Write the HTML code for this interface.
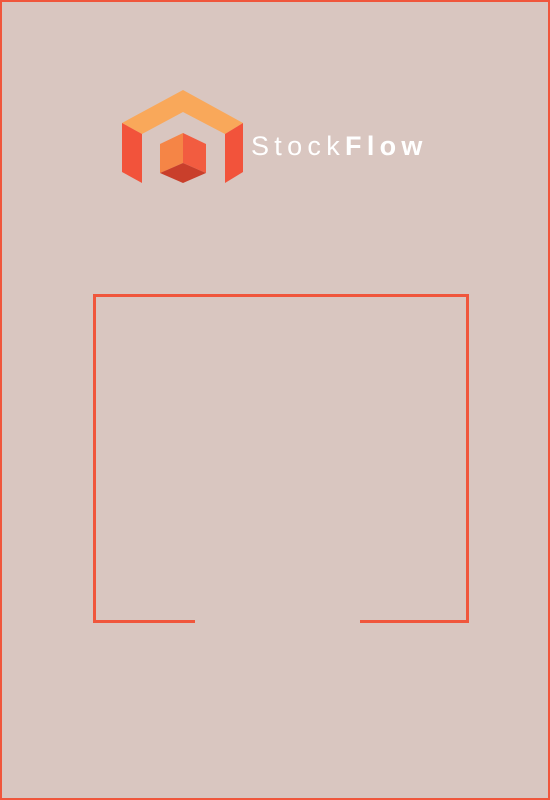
<!DOCTYPE html>
<html><head><meta charset="utf-8"><style>
html,body{margin:0;padding:0}
body{width:550px;height:800px;background:#d9c6c0;position:relative;overflow:hidden}
.b{position:absolute;left:0;top:0;width:546px;height:796px;border:2px solid #f0563c}
.t{position:absolute;left:251px;top:131px;font-family:"Liberation Sans",sans-serif;font-size:27px;color:#fff;letter-spacing:5.3px;white-space:nowrap}
.t b{font-weight:bold}
.f{position:absolute;background:#f0563c}
</style></head><body>
<div class="b"></div>
<svg style="position:absolute;left:0;top:0" width="550" height="800">
<polygon points="122,123 183,90 243,123 225,134 183,112 142,134" fill="#f9a85a"/>
<polygon points="122,123 142,134 142,183 122,172" fill="#f2533b"/>
<polygon points="243,123 225,134 225,183 243,172" fill="#f2533b"/>
<polygon points="160,144 183,133 183,163 160,173" fill="#f58546"/>
<polygon points="183,133 206,144 206,173 183,163" fill="#f25c40"/>
<polygon points="160,173 183,163 206,173 183,183" fill="#c93f2b"/>
</svg>
<div class="t">Stock<b>Flow</b></div>
<div class="f" style="left:93px;top:294px;width:376px;height:3px"></div>
<div class="f" style="left:93px;top:294px;width:3px;height:329px"></div>
<div class="f" style="left:466px;top:294px;width:3px;height:329px"></div>
<div class="f" style="left:93px;top:620px;width:102px;height:3px"></div>
<div class="f" style="left:360px;top:620px;width:109px;height:3px"></div>
</body></html>
